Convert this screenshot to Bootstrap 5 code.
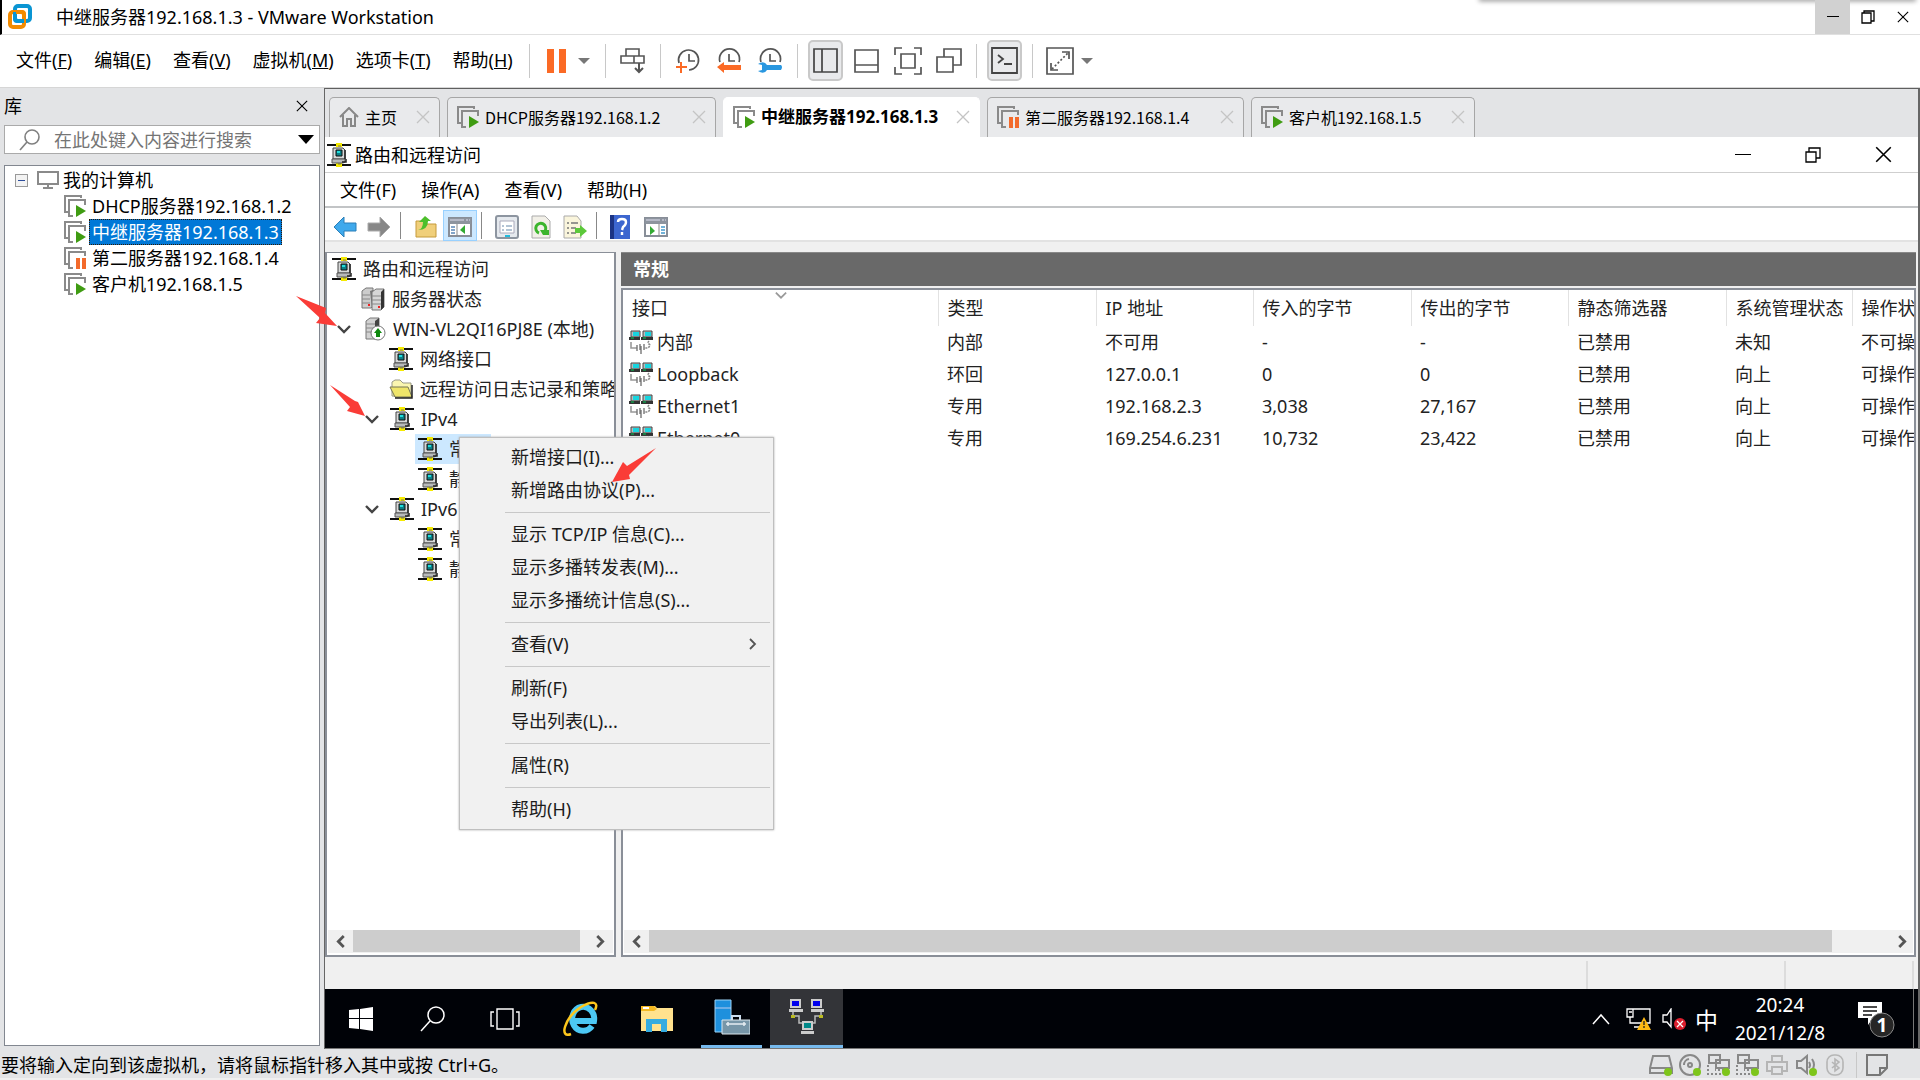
<!DOCTYPE html>
<html lang="zh-CN">
<head>
<meta charset="utf-8">
<meta name="viewport" content="width=device-width, initial-scale=1">
<title>中继服务器192.168.1.3 - VMware Workstation</title>
<link href="https://cdn.jsdelivr.net/npm/bootstrap@5.3.0/dist/css/bootstrap.min.css" rel="stylesheet">
<style>
body{font-family:"Noto Sans","Noto Sans CJK SC",sans-serif;font-size:18px;line-height:26px;color:#000;height:100vh;overflow:hidden;background:#fff}
button{border:0;background:none;padding:0;color:inherit;font:inherit;white-space:nowrap}
svg{display:block;flex:none}
ul{list-style:none;margin:0;padding:0}
.host-title{height:35px;border-bottom:1px solid #e0e0e0;border-left:2px solid #000;padding-left:6px;position:relative}
.shadow-clip{height:8px}
.top-shadow{position:absolute;top:-4px;left:77%;right:4px;height:4px;box-shadow:0 1px 5px #888}
.host-title h1{font-size:18px;line-height:26px;font-weight:400;margin:0 0 0 24px}
.win-btn{width:35px;height:34px;display:flex;align-items:center;justify-content:center}
.win-btn.hovered{background:#d1d1d1}
.host-menu{height:53px;border-bottom:1px solid #d6d6d6;padding:0 0 1px 16px}
.menu-words{gap:22px;padding-bottom:2px}
.tool-row{gap:13px}
.vsep{width:1px;height:34px;background:#c8c8c8;flex:none}
.tool{width:28px;height:40px;display:flex;align-items:center;justify-content:center}
.tool.pressed{width:35px;height:41px;margin:0 -3px;background:#e9eaec;border:2px solid #c9c9c9;border-radius:5px}
.library{width:324px;background:#e3e4e6;padding:0 4px 3px}
.lib-head{height:37px;padding-bottom:1px}
.search-box{height:29px;border:1px solid #aaa;background:#fff;padding:0 5px 0 14px}
.search-box input{border:0;outline:0;min-width:0;font-size:18px;background:transparent;padding:0;color:#555;margin-left:13px}
.search-box input::placeholder{color:#757575;opacity:1}
.lib-tree{border:1px solid #828790;background:#fff;margin-top:11px;padding:1px 0}
.lib-tree li{height:26px;display:flex;align-items:center;white-space:nowrap}
.lib-tree .vm{padding-left:59px}
.lib-tree .vm a{color:#000;text-decoration:none;margin-left:3px;padding:0 2px;line-height:24px;border:1px solid transparent}
.lib-tree .vm a.chosen{background:#0078d7;color:#fff;border:1px dotted #301800}
.workspace{background:#fff;border-top:1px solid #5f5f5f;border-left:1px solid #666;border-right:2px solid #666;min-width:0}
.tab-strip{height:48px;background:#e3e4e6;padding:8px 4px 0;gap:7px}
.vm-tab{height:40px;border:1px solid #a6a6a6;border-bottom:0;border-radius:5px 5px 0 0;background:#e9eaec;font:16px/24px "Noto Sans CJK SC",sans-serif;padding:0 9px 2px;display:flex;align-items:center}
.vm-tab span{margin-left:6px;flex:1;text-align:left}
.vm-tab.current{background:#fff;border-color:#fff;font-size:17px;font-weight:700;font-family:"Noto Sans","Noto Sans CJK SC",sans-serif}
.w-home{width:111px}.w-long{width:269px}.w-mid{width:257px}.w-short{width:224px}
.guest-title{height:36px;border-bottom:1px solid #cfcfcf;padding-left:2px}
.guest-title .win-btn{width:70px}
.guest-menu{height:35px;border-bottom:2px solid #c2c4c6;padding-left:15px;gap:25px}
.guest-tools{height:34px;border-bottom:2px solid #e2e2e2;padding:2px 0 0 3px}
.guest-tools .vsep{height:27px;background:#888}
.guest-tools button{width:34px;height:31px;padding-top:3px;display:flex;align-items:center;justify-content:center}
.guest-tools .on{background:#cce8ff;border:1px solid #99d1ff}
.guest-body{background:#f0f0f0;padding:10px 2px 0 0;gap:5px;position:relative;min-height:0}
.tree-pane{width:291px;border:2px solid #8a8f98;border-top-width:1px;background:#fff;overflow:hidden}
.tree-pane ul{padding-top:1px}
.node{height:30px;display:flex;align-items:center;white-space:nowrap}
.node a{color:#222;text-decoration:none;margin-left:7px}
.node .chev{width:14px;margin-right:11px}
.lv0{padding-left:5px}.lv1{padding-left:34px}.lv1c{padding-left:10px}.lv2{padding-left:62px}.lv2c{padding-left:38px}.lv3{padding-left:91px}
.lv3.picked{background:linear-gradient(#cce8ff,#cce8ff) 88px 0/76px 30px no-repeat}
.hbar{height:23px;background:#f0f0f0;margin:0 1px 2px}
.hbar .thumb{height:22px;background:#cdcdcd}
.hbar button{width:25px;display:flex;justify-content:center;align-items:center;height:22px}
.detail{min-width:0}
.pane-caption{height:34px;background:#696969;color:#fff;font-weight:700;padding:0 12px;line-height:33px;border-top:1px solid #888}
.list-pane{border:2px solid #8a8f98;margin-top:2px;background:#fff;overflow:hidden;position:relative}
.sort-mark{position:absolute;left:152px;top:0}
.iface{table-layout:fixed;width:1320px;border-collapse:collapse;color:#222}
.iface th{font-weight:400;height:36px;border-right:1px solid #e2e2e2;padding:0 0 0 9px;white-space:nowrap}
.iface td{height:32px;padding:0 0 1px 9px;white-space:nowrap}
.iface td:first-child{padding-left:6px}
.guest-status{height:32px;background:#f0f0f0}
.guest-status div{border-right:2px solid #dcdcdc;height:28px}
.gs-mid{width:198px}.gs-end{width:128px}
.context-list{position:absolute;left:134px;top:195px;width:315px;background:#f1f1f1;border:1px solid #bfbfbf;padding:3px;margin:0;border-radius:0;z-index:5;box-shadow:0 0 2px #aaa}
.context-list button{display:flex;align-items:center;justify-content:space-between;width:100%;height:33px;padding:0 11px 1px 48px;color:#1c1c1c}
.context-list hr{margin:5px 0 5px 42px;border:0;border-top:1px solid #c8c8c8;opacity:1}
.taskbar{height:60px;background:#000207;border-bottom:1px solid #777;color:#fff}
.task{width:72px;height:59px;display:flex;align-items:center;justify-content:center}
.task.open{width:61px;border-bottom:3px solid #76b9ed;margin-left:8px}
.task.front{width:73px;background:#333438;border-bottom:3px solid #76b9ed;margin-left:8px}
.clock{font-size:19px;line-height:28px;text-align:center;width:112px;margin-left:6px}
.notice{margin-left:21px}
.ime{font-size:23px;font-family:"Noto Sans CJK SC",sans-serif}
.desk-edge{height:59px;background:#777;margin:0 4px 0 18px}
.host-status{height:31px;background:#e3e4e6;border-bottom:2px solid #f0f0f0;padding:2px 0 0 1px}
.device-row{gap:5px}
.device-row .vsep{height:26px}
.pointer-arrow{position:absolute;z-index:9;pointer-events:none}
</style>
<script src="https://cdn.jsdelivr.net/npm/bootstrap@5.3.0/dist/js/bootstrap.bundle.min.js"></script>
</head>
<body class="d-flex flex-column">
<svg width="0" height="0" class="position-absolute" aria-hidden="true">
<defs>
<symbol id="vmrun" viewBox="0 0 22 22"><path d="M5 17H1V1h16v2M9 21H5V5h16v5" fill="none" stroke="#8a8a8a" stroke-width="2"/><path d="M12 10v12l10-6z" fill="#3f9c12"/></symbol>
<symbol id="vmpause" viewBox="0 0 22 22"><path d="M5 17H1V1h16v2M9 21H5V5h16v4" fill="none" stroke="#8a8a8a" stroke-width="2"/><path d="M12 11h4v11h-4zM18 11h4v11h-4z" fill="#f36a2b"/></symbol>
<symbol id="cross" viewBox="0 0 14 14"><path d="M1 1l12 12M13 1L1 13" fill="none" stroke="currentColor" stroke-width="1.3"/></symbol>
<symbol id="rras" viewBox="0 0 24 24"><path d="M0 2h24M0 22h24" stroke="#111" stroke-width="2"/><path d="M9 0h6v4H9zM9 20h6v4H9z" fill="#f5ea00"/><path d="M11 3h3M11 21h3" stroke="#776"/><path d="M6 5h10l2 2v9H6z" fill="#d7d9d9" stroke="#444"/><path d="M9 7h6v6H9z" fill="#0a7f86" stroke="#111"/><path d="M10 8h3v2h-3z" fill="#2dd"/><path d="M5 16h13v3l-2 1H5z" fill="#b8baba" stroke="#555"/><path d="M18 7v9M19 16v3h-4" stroke="#222" stroke-width="1.5" fill="none"/></symbol>
<symbol id="nic" viewBox="0 0 24 24"><path d="M2 1h9v6H2zM14 1h9v6h-9z" fill="#bbb" stroke="#444"/><path d="M0 7h11v3H0zM12 7h12v3H12z" fill="#333"/><path d="M4 2h6v4H4zM16 2h6v4h-6z" fill="#18d5df"/><path d="M2 8h3M14 8h3" stroke="#0c5"/><path d="M2 12v6h6" stroke="#999" stroke-width="1.6" fill="none"/><path d="M20 11q-2 2 0 3t-1 4h-4" stroke="#888" stroke-width="1.6" fill="none" stroke-dasharray="2 1"/><path d="M8 15v6M11 14v6M12 16v8M15 14v6" stroke="#777" stroke-width="1.4" fill="none"/></symbol>
<symbol id="left" viewBox="0 0 12 12"><path d="M9 1L4 6l5 5" fill="none" stroke="#555" stroke-width="2.6"/></symbol>
<symbol id="right" viewBox="0 0 12 12"><path d="M3 1l5 5-5 5" fill="none" stroke="#555" stroke-width="2.6"/></symbol>
<symbol id="down" viewBox="0 0 14 14"><path d="M1 4l6 6 6-6" fill="none" stroke="#444" stroke-width="2.4"/></symbol>
<symbol id="boxes" viewBox="0 0 16 16"><path d="M1 5h10v10H1zM4 5V1h11v10h-4" fill="none" stroke="currentColor" stroke-width="1.3"/></symbol>
<symbol id="lan" viewBox="0 0 24 24"><path d="M2 2h11v8H2zM9 7h13v8H9z" fill="#e3e4e6" stroke="#888" stroke-width="2"/><path d="M1 12v9h15M17 17H8" fill="none" stroke="#888" stroke-width="2" stroke-dasharray="2 2"/><circle cx="19" cy="19" r="4" fill="#7ec51b"/></symbol>
</defs>
</svg>

<header class="host-title d-flex align-items-center">
  <div class="shadow-clip overflow-hidden position-absolute top-0 start-0 end-0"><div class="top-shadow"></div></div>
  <svg width="24" height="26" viewBox="0 0 24 26"><rect x="7" y="2" width="15" height="15" rx="3" fill="none" stroke="#0a95d3" stroke-width="4"/><rect x="2" y="8" width="14" height="15" rx="3" fill="none" stroke="#f38b00" stroke-width="4"/><path d="M7 8v7q0 2 2 2h7" fill="none" stroke="#0a95d3" stroke-width="4"/><path d="M8 8h6q2 0 2 2v4" fill="none" stroke="#f38b00" stroke-width="4"/></svg>
  <h1>中继服务器192.168.1.3 - VMware Workstation</h1>
  <div class="d-flex ms-auto position-relative">
    <button class="win-btn hovered" aria-label="最小化"><svg width="12" height="12"><path d="M0 5h12v1H0z"/></svg></button>
    <button class="win-btn" aria-label="还原"><svg width="14" height="14" viewBox="0 0 14 14"><path d="M1 3h9v10H1zM3 3V1h10v10h-3" fill="none" stroke="#000" stroke-width="1.3"/></svg></button>
    <button class="win-btn" aria-label="关闭"><svg width="12" height="12"><use href="#cross"/></svg></button>
  </div>
</header>

<nav class="host-menu d-flex align-items-center">
  <div class="menu-words d-flex">
    <button>文件(<u>F</u>)</button><button>编辑(<u>E</u>)</button><button>查看(<u>V</u>)</button><button>虚拟机(<u>M</u>)</button><button>选项卡(<u>T</u>)</button><button>帮助(<u>H</u>)</button>
  </div>
  <div class="tool-row d-flex align-items-center ms-3">
    <i class="vsep"></i>
    <button class="ms-1" aria-label="挂起"><svg width="45" height="24" viewBox="0 0 45 24"><path d="M0 0h7v24H0zM12 0h7v24h-7z" fill="#fb6a25"/><path d="M31 9h12l-6 6z" fill="#777"/></svg></button>
    <i class="vsep"></i>
    <button class="tool" aria-label="发送 Ctrl+Alt+Del"><svg width="26" height="26" viewBox="0 0 26 26" fill="none" stroke="#555" stroke-width="1.6"><path d="M6 1h13v7H6zM1 8h13v7H1zM14 8h10v7H14z"/><path d="M19 15v9M15 20l4 4 4-4" stroke-width="2"/></svg></button>
    <i class="vsep"></i>
    <button class="tool" aria-label="拍摄快照"><svg width="24" height="26" viewBox="0 0 24 26"><path d="M3 15A10 10 0 1 1 13 22M13 6v7h6" fill="none" stroke="#555" stroke-width="1.7"/><path d="M0 19h11M5 14v11" stroke="#fb6a25" stroke-width="2"/></svg></button>
    <button class="tool" aria-label="恢复快照"><svg width="26" height="26" viewBox="0 0 26 26"><path d="M4 14A10 10 0 1 1 23 14M13 6v7h6" fill="none" stroke="#555" stroke-width="1.7"/><path d="M1 19l7-5v3h17v5H8v3z" fill="#fb6a25"/></svg></button>
    <button class="tool" aria-label="管理快照"><svg width="26" height="26" viewBox="0 0 26 26"><path d="M4 14A10 10 0 1 1 23 14M13 6v7h6" fill="none" stroke="#555" stroke-width="1.7"/><path d="M1 16q6-4 9 1h14q2 2 0 5H10q-3 5-9 1l4-1v-5z" fill="#2997e0"/></svg></button>
    <i class="vsep"></i>
    <button class="tool pressed" aria-label="库"><svg width="25" height="25" fill="none" stroke="#444" stroke-width="1.7"><path d="M1 1h23v23H1zM9 1v23"/></svg></button>
    <button class="tool" aria-label="缩略图"><svg width="25" height="24" fill="none" stroke="#555" stroke-width="1.7"><path d="M1 1h23v22H1zM1 16h23"/></svg></button>
    <button class="tool" aria-label="全屏"><svg width="28" height="28" fill="none" stroke="#555" stroke-width="1.7"><path d="M8 1H1v7M20 1h7v7M8 27H1v-7M20 27h7v-7M7 7h14v14H7z"/></svg></button>
    <button class="tool" aria-label="Unity"><svg width="26" height="26" fill="none" stroke="#555" stroke-width="1.7"><path d="M1 9h16v15H1zM8 9V1h17v16h-8"/></svg></button>
    <i class="vsep"></i>
    <button class="tool pressed" aria-label="控制台"><svg width="27" height="27" fill="none" stroke="#444" stroke-width="1.8"><path d="M1 1h25v25H1zM7 8l5 4-5 4M13 17h8"/></svg></button>
    <i class="vsep"></i>
    <button aria-label="自由拉伸"><svg width="50" height="28" viewBox="0 0 50 28" fill="none" stroke="#555" stroke-width="1.7"><path d="M1 1h26v26H1z"/><path d="M5 16v7h7M16 5h7v7"/><path d="M6 22L22 6" stroke-dasharray="2 2"/><path d="M35 11h12l-6 6z" fill="#777" stroke="none"/></svg></button>
  </div>
</nav>

<main class="d-flex flex-grow-1 overflow-hidden">
  <aside class="library d-flex flex-column flex-shrink-0">
    <div class="lib-head d-flex align-items-center justify-content-between pe-2"><span>库</span><button class="me-1" aria-label="关闭库"><svg width="12" height="12"><use href="#cross"/></svg></button></div>
    <label class="search-box d-flex align-items-center">
      <svg width="22" height="22" viewBox="0 0 22 22" fill="none" stroke="#808080" stroke-width="1.6"><circle cx="13" cy="8" r="7"/><path d="M8 13l-7 8"/></svg>
      <input class="flex-grow-1" type="text" placeholder="在此处键入内容进行搜索" aria-label="搜索">
      <svg width="16" height="9"><path d="M0 0h16L8 9z"/></svg>
    </label>
    <ul class="lib-tree flex-grow-1">
      <li class="ps-2"><svg class="me-2" width="16" height="13" viewBox="0 0 16 13"><path d="M2 0h13v13H2z" fill="#999"/><path d="M3 1h11v11H3z" fill="#f3f3f3"/><path d="M5 6h7v1H5z" fill="#2c4d9b"/></svg><svg width="22" height="18" fill="none" stroke="#8a8a8a" stroke-width="2"><path d="M1 1h20v12H1zM11 13v4M6 17h10"/></svg><span class="ms-1">我的计算机</span></li>
      <li class="vm"><svg width="22" height="22"><use href="#vmrun"/></svg><a href="#">DHCP服务器192.168.1.2</a></li>
      <li class="vm"><svg width="22" height="22"><use href="#vmrun"/></svg><a href="#" class="chosen">中继服务器192.168.1.3</a></li>
      <li class="vm"><svg width="22" height="22"><use href="#vmpause"/></svg><a href="#">第二服务器192.168.1.4</a></li>
      <li class="vm"><svg width="22" height="22"><use href="#vmrun"/></svg><a href="#">客户机192.168.1.5</a></li>
    </ul>
  </aside>

  <section class="workspace d-flex flex-column flex-grow-1">
    <div class="tab-strip d-flex" role="tablist">
      <button class="vm-tab w-home" role="tab"><svg width="20" height="20" fill="none" stroke="#888" stroke-width="2"><path d="M1 10l9-9 9 9M4 8v11h4v-7h4v7h4V8"/></svg><span>主页</span><svg width="14" height="14" color="#c4c4c4"><use href="#cross"/></svg></button>
      <button class="vm-tab w-long" role="tab"><svg width="22" height="22"><use href="#vmrun"/></svg><span>DHCP服务器192.168.1.2</span><svg width="14" height="14" color="#c4c4c4"><use href="#cross"/></svg></button>
      <button class="vm-tab w-mid current" role="tab"><svg width="22" height="22"><use href="#vmrun"/></svg><span>中继服务器192.168.1.3</span><svg width="14" height="14" color="#c4c4c4"><use href="#cross"/></svg></button>
      <button class="vm-tab w-mid" role="tab"><svg width="22" height="22"><use href="#vmpause"/></svg><span>第二服务器192.168.1.4</span><svg width="14" height="14" color="#c4c4c4"><use href="#cross"/></svg></button>
      <button class="vm-tab w-short" role="tab"><svg width="22" height="22"><use href="#vmrun"/></svg><span>客户机192.168.1.5</span><svg width="14" height="14" color="#c4c4c4"><use href="#cross"/></svg></button>
    </div>

    <div class="guest-title d-flex align-items-center">
      <svg width="24" height="24"><use href="#rras"/></svg><span class="ms-1">路由和远程访问</span>
      <div class="d-flex ms-auto">
        <button class="win-btn" aria-label="最小化"><svg width="16" height="16"><path d="M0 7h16v1H0z"/></svg></button>
        <button class="win-btn" aria-label="还原"><svg width="16" height="16"><use href="#boxes"/></svg></button>
        <button class="win-btn" aria-label="关闭"><svg width="17" height="17"><use href="#cross"/></svg></button>
      </div>
    </div>
    <nav class="guest-menu d-flex align-items-center"><button>文件(F)</button><button>操作(A)</button><button>查看(V)</button><button>帮助(H)</button></nav>
    <div class="guest-tools d-flex align-items-center">
      <button aria-label="后退"><svg width="24" height="22" viewBox="0 0 24 22"><path d="M1 11L11 1v6h12v8H11v6z" fill="#3fa9ec" stroke="#2a7fb8"/></svg></button>
      <button aria-label="前进"><svg width="24" height="22" viewBox="0 0 24 22"><path d="M23 11L13 1v6H1v8h12v6z" fill="#878787" stroke="#aaa"/></svg></button>
      <i class="vsep ms-1 me-2"></i>
      <button aria-label="上一级"><svg width="22" height="24" viewBox="0 0 22 24"><path d="M1 22V6h8l2 3h10v13z" fill="#f0cf7a" stroke="#c59a3b"/><path d="M3 15q5-1 5-8H4l6-6 6 5h-3q0 9-10 9z" fill="#4cbf2b"/></svg></button>
      <button class="on" aria-label="显示树"><svg width="24" height="20"><path d="M1 1h22v18H1z" fill="#fff" stroke="#888e98" stroke-width="2"/><path d="M1 1h22v6H1z" fill="#8d949e"/><path d="M2 3h14M18 3h2M21 3h1" stroke="#dde"/><path d="M9 7v12" stroke="#888"/><path d="M3 10h4M3 13h4M3 16h4" stroke="#5b88b8" stroke-width="1.5"/><path d="M17 8v9l-5-4z" fill="#3a3"/></svg></button>
      <i class="vsep ms-1 me-1"></i>
      <button class="ms-1" aria-label="属性"><svg width="24" height="24"><rect x="1" y="1" width="22" height="22" rx="2" fill="#e5e9ee" stroke="#8d95a0" stroke-width="2"/><path d="M5 6h14v12H5z" fill="#fff" stroke="#aab"/><path d="M7 11h2M11 11h6M7 15h2M11 15h6" stroke="#68a"/><path d="M10 21h5" stroke="#2bd" stroke-width="2"/></svg></button>
      <button aria-label="刷新"><svg width="20" height="24"><path d="M1 1h13l5 5v17H1z" fill="#f2f0e8" stroke="#aaa"/><path d="M8 18a5 5 0 1 1 6-2" fill="none" stroke="#3cb52d" stroke-width="3"/><path d="M9 15h9v5h-6z" fill="#3cb52d"/></svg></button>
      <button aria-label="导出"><svg width="24" height="24"><path d="M1 1h13l4 5v17H1z" fill="#faf5dc" stroke="#aaa"/><path d="M4 8h2M8 8h7M4 13h2M8 13h5M4 18h2M8 18h5" stroke="#777" stroke-width="1.5"/><path d="M12 13h5v-3l7 6-7 6v-4h-5z" fill="#5cc83a"/></svg></button>
      <i class="vsep mx-1"></i>
      <button aria-label="帮助"><svg class="ms-1" width="20" height="24"><path d="M0 0h20v24H0z" fill="#3c66cf"/><path d="M0 0h4v24H0z" fill="#1c3484"/><path d="M8 7q0-3 4-3t4 3-3 5l-1 3M12 17v3" fill="none" stroke="#fff" stroke-width="2.4"/></svg></button>
      <button class="ms-1" aria-label="操作窗格"><svg width="24" height="20"><path d="M1 1h22v18H1z" fill="#fff" stroke="#888e98" stroke-width="2"/><path d="M1 1h22v6H1z" fill="#8d949e"/><path d="M2 3h14M18 3h2M21 3h1" stroke="#dde"/><path d="M15 7v12" stroke="#888"/><path d="M17 10h4M17 13h4M17 16h4" stroke="#49c" stroke-width="1.5"/><path d="M6 9v9l5-4z" fill="#3a3"/></svg></button>
    </div>

    <div class="guest-body d-flex flex-grow-1">
      <div class="tree-pane d-flex flex-column flex-shrink-0">
        <ul class="flex-grow-1">
          <li class="node lv0"><svg width="24" height="24"><use href="#rras"/></svg><a href="#">路由和远程访问</a></li>
          <li class="node lv1"><svg width="24" height="24"><path d="M1 4l4-3h7v18l-2 2H1z" fill="#ccc" stroke="#777"/><path d="M9 4l3-1 2 1v17l-3 1z" fill="#777"/><path d="M11 5l4-3h8v18l-3 3h-9z" fill="#d6d6d6" stroke="#777"/><path d="M20 5l3-3v18l-3 3z" fill="#333"/><path d="M1 8h8M1 12h8M1 16h8M11 9h9M11 13h9M11 17h9" stroke="#888"/><path d="M7 18h2M17 20h2" stroke="#e22" stroke-width="2"/></svg><a href="#">服务器状态</a></li>
          <li class="node lv1c"><svg class="chev" width="14" height="14"><use href="#down"/></svg><svg width="24" height="24"><path d="M4 4l4-3h9v18l-4 3H4z" fill="#d2d2d2" stroke="#777"/><path d="M13 4l4-3v18l-4 3z" fill="#444"/><path d="M4 7h9M4 11h9M4 15h9" stroke="#888"/><circle cx="16" cy="16" r="7" fill="#fff" stroke="#777"/><path d="M16 11l4 5h-2v4h-4v-4h-2z" fill="#108a10"/></svg><a href="#">WIN-VL2QI16PJ8E (本地)</a></li>
          <li class="node lv2"><svg width="24" height="24"><use href="#rras"/></svg><a href="#">网络接口</a></li>
          <li class="node lv2"><svg width="24" height="20"><path d="M3 17V3l3-2h5l3 3h8v14z" fill="#faf6b0" stroke="#998"/><path d="M1 8h18l4 10H6z" fill="#efe56a" stroke="#775"/><path d="M6 19h17V6" stroke="#222" fill="none" stroke-width="1.5"/></svg><a href="#">远程访问日志记录和策略</a></li>
          <li class="node lv2c"><svg class="chev" width="14" height="14"><use href="#down"/></svg><svg width="24" height="24"><use href="#rras"/></svg><a href="#">IPv4</a></li>
          <li class="node lv3 picked"><svg width="24" height="24"><use href="#rras"/></svg><a href="#">常规</a></li>
          <li class="node lv3"><svg width="24" height="24"><use href="#rras"/></svg><a href="#">静态路由</a></li>
          <li class="node lv2c"><svg class="chev" width="14" height="14"><use href="#down"/></svg><svg width="24" height="24"><use href="#rras"/></svg><a href="#">IPv6</a></li>
          <li class="node lv3"><svg width="24" height="24"><use href="#rras"/></svg><a href="#">常规</a></li>
          <li class="node lv3"><svg width="24" height="24"><use href="#rras"/></svg><a href="#">静态路由</a></li>
        </ul>
        <div class="hbar d-flex"><button aria-label="向左"><svg width="13" height="13"><use href="#left"/></svg></button><div class="thumb flex-grow-1 me-2"></div><button aria-label="向右"><svg width="13" height="13"><use href="#right"/></svg></button></div>
      </div>
      <div class="detail d-flex flex-column flex-grow-1">
        <div class="pane-caption">常规</div>
        <div class="list-pane d-flex flex-column flex-grow-1">
          <svg class="sort-mark" width="12" height="12" viewBox="0 0 14 14"><path d="M1 3l6 6 6-6" fill="none" stroke="#999" stroke-width="2"/></svg>
          <div class="flex-grow-1">
          <table class="iface">
            <colgroup><col style="width:315px"><col style="width:158px"><col style="width:157px"><col style="width:158px"><col style="width:157px"><col style="width:158px"><col style="width:126px"><col></colgroup>
            <thead><tr><th>接口</th><th>类型</th><th>IP 地址</th><th>传入的字节</th><th>传出的字节</th><th>静态筛选器</th><th>系统管理状态</th><th>操作状态</th></tr></thead>
            <tbody>
              <tr><td><div class="d-flex align-items-center"><svg class="me-1" width="24" height="24"><use href="#nic"/></svg>内部</div></td><td>内部</td><td>不可用</td><td>-</td><td>-</td><td>已禁用</td><td>未知</td><td>不可操作</td></tr>
              <tr><td><div class="d-flex align-items-center"><svg class="me-1" width="24" height="24"><use href="#nic"/></svg>Loopback</div></td><td>环回</td><td>127.0.0.1</td><td>0</td><td>0</td><td>已禁用</td><td>向上</td><td>可操作</td></tr>
              <tr><td><div class="d-flex align-items-center"><svg class="me-1" width="24" height="24"><use href="#nic"/></svg>Ethernet1</div></td><td>专用</td><td>192.168.2.3</td><td>3,038</td><td>27,167</td><td>已禁用</td><td>向上</td><td>可操作</td></tr>
              <tr><td><div class="d-flex align-items-center"><svg class="me-1" width="24" height="24"><use href="#nic"/></svg>Ethernet0</div></td><td>专用</td><td>169.254.6.231</td><td>10,732</td><td>23,422</td><td>已禁用</td><td>向上</td><td>可操作</td></tr>
            </tbody>
          </table>
          </div>
          <div class="hbar d-flex"><button aria-label="向左"><svg width="13" height="13"><use href="#left"/></svg></button><div class="thumb flex-grow-1 me-5"></div><button class="ms-2 ps-1" aria-label="向右"><svg width="13" height="13"><use href="#right"/></svg></button></div>
        </div>
      </div>
      <div class="context-list" role="menu">
        <button role="menuitem">新增接口(I)...</button>
        <button role="menuitem">新增路由协议(P)...</button>
        <hr>
        <button role="menuitem">显示 TCP/IP 信息(C)...</button>
        <button role="menuitem">显示多播转发表(M)...</button>
        <button role="menuitem">显示多播统计信息(S)...</button>
        <hr>
        <button role="menuitem">查看(V)<svg width="12" height="12" viewBox="0 0 12 12"><path d="M3 1l5 5-5 5" fill="none" stroke="#555" stroke-width="1.8"/></svg></button>
        <hr>
        <button role="menuitem">刷新(F)</button>
        <button role="menuitem">导出列表(L)...</button>
        <hr>
        <button role="menuitem">属性(R)</button>
        <hr>
        <button role="menuitem">帮助(H)</button>
      </div>
    </div>
    <div class="guest-status d-flex align-items-end"><div class="flex-grow-1"></div><div class="gs-mid"></div><div class="gs-end me-1"></div></div>

    <div class="taskbar d-flex align-items-center">
      <button class="task" aria-label="开始"><svg width="24" height="24" fill="#fff"><path d="M0 3l10-1v9H0zM11 2l13-2v11H11zM0 12h10v10L0 21zM11 12h13v12l-13-2z"/></svg></button>
      <button class="task" aria-label="搜索"><svg width="26" height="26" fill="none" stroke="#fff" stroke-width="1.5"><circle cx="16" cy="9" r="8"/><path d="M10 15L1 25"/></svg></button>
      <button class="task" aria-label="任务视图"><svg width="30" height="22" fill="none" stroke="#fff" stroke-width="1.4"><path d="M7 1h16v20H7zM4 4H1v14h3M26 4h3v14h-3"/></svg></button>
      <button class="task ms-1" aria-label="Internet Explorer"><svg width="36" height="36" viewBox="0 0 36 36"><path d="M29 25A11 12 0 1 1 31 20H10" fill="none" stroke="#4cc8f4" stroke-width="6"/><path d="M8 33C-4 38 1 17 18 6 30-1 36 1 32 9" fill="none" stroke="#fcc61c" stroke-width="2.5"/></svg></button>
      <button class="task ms-1" aria-label="文件资源管理器"><svg width="32" height="28"><path d="M0 1h14l2 2h16v23H0z" fill="#ffe28e"/><path d="M0 1h13l3 3-3 2H0z" fill="#f4b922"/><path d="M2 3h6" stroke="#fff" stroke-width="2"/><path d="M5 27V14h21v13h-6v-8h-9v8z" fill="#35ace0"/></svg></button>
      <button class="task open" aria-label="服务器管理器"><svg width="36" height="36" viewBox="0 0 36 36"><path d="M1 1h16v32H1z" fill="#1e90dd" stroke="#9bd3f7"/><path d="M1 9h16" stroke="#bce"/><path d="M18 21v-4h8v4" fill="none" stroke="#cde" stroke-width="2"/><path d="M8 21h28v14H8z" fill="#7796a8" stroke="#dbe6ec"/><path d="M12 25h20M14 23v4M30 23v4" stroke="#e6edf2" stroke-width="1.5"/></svg></button>
      <button class="task front" aria-label="路由和远程访问"><svg width="36" height="36" viewBox="0 0 36 36"><path d="M4 17h6v7h4M32 17h-6v7h-4M4 13v6M32 13v6" fill="none" stroke="#bbb" stroke-width="1.5"/><g fill="#ccc"><path d="M1 0h11v9H1zM0 10h14v3H0zM22 0h11v9H22zM22 10h13v3H22zM13 22h11v9H13zM12 32h13v3H12z"/></g><path d="M3 2h7v5H3zM24 2h7v5h-7z" fill="#00e"/><path d="M15 24h7v5h-7z" fill="#088"/><path d="M2 16h4v3H2zM30 16h4v3h-4z" fill="#bb2"/></svg></button>
      <div class="d-flex align-items-center ms-auto">
        <svg class="me-3" width="18" height="12" fill="none" stroke="#fff" stroke-width="1.5"><path d="M1 11l8-9 8 9"/></svg>
        <svg width="25" height="22" fill="none" stroke="#fff" stroke-width="1.3"><path d="M7 5V1h17v14H4V9M1 1h6v8H1zM3 4h3M8 19h6"/><path d="M18 9l7 13H11z" fill="#fdb813" stroke="none"/><path d="M18 13v4M18 18v2" stroke="#222"/></svg>
        <svg class="ms-2 me-1" width="28" height="22" fill="none" stroke="#fff" stroke-width="1.3"><path d="M4 7h4l4-6v18l-4-5H4z"/><circle cx="21" cy="16" r="6" fill="#dc1f2e" stroke="none"/><path d="M18 13l6 6M24 13l-6 6"/></svg>
        <span class="ime ms-1">中</span>
        <div class="clock">20:24<br>2021/12/8</div>
        <button class="notice" aria-label="通知"><svg width="38" height="38" viewBox="0 0 38 38"><path d="M1 2h24v16H16l-5 7v-7H1z" fill="#fff"/><path d="M6 7h14M6 11h14M6 15h9" stroke="#111" stroke-width="1.5"/><circle cx="25" cy="25" r="12" fill="#262626" stroke="#888"/><text x="25" y="32" text-anchor="middle" fill="#fff" font-size="19" font-weight="700">1</text></svg></button>
        <i class="vsep desk-edge"></i>
      </div>
    </div>
  </section>
</main>

<footer class="host-status d-flex align-items-center">
  <span>要将输入定向到该虚拟机，请将鼠标指针移入其中或按 Ctrl+G。</span>
  <div class="device-row d-flex align-items-center ms-auto me-4 pe-2">
    <svg width="24" height="22" fill="none" stroke="#888" stroke-width="2"><path d="M4 2h16l3 12v5H1v-5zM1 14h22"/><circle cx="19" cy="18" r="4" fill="#7ec51b" stroke="none"/></svg>
    <svg width="24" height="22" fill="none" stroke="#888" stroke-width="2"><circle cx="12" cy="11" r="10"/><circle cx="12" cy="11" r="2"/><path d="M6 11a6 6 0 0 1 5-6"/><circle cx="19" cy="18" r="4" fill="#7ec51b" stroke="none"/></svg>
    <svg width="24" height="24"><use href="#lan"/></svg>
    <svg width="24" height="24"><use href="#lan"/></svg>
    <svg width="24" height="22" fill="none" stroke="#b5b5b5" stroke-width="2"><path d="M7 8V2h10v6M6 17H2V8h20v9h-4M7 13h10v7H7z"/></svg>
    <svg width="24" height="22" fill="none" stroke="#888" stroke-width="2"><path d="M3 7h4l6-5v17l-6-5H3zM15 8q2 3 0 6M18 5q4 6 0 11"/><circle cx="19" cy="18" r="4" fill="#7ec51b" stroke="none"/></svg>
    <svg width="24" height="22" fill="none" stroke="#b5b5b5" stroke-width="1.6"><rect x="4" y="1" width="16" height="20" rx="7"/><path d="M9 8l7 6-4 3V5l4 3-7 6"/></svg>
    <i class="vsep mx-1"></i>
    <svg width="22" height="22" fill="none" stroke="#777" stroke-width="2"><path d="M1 1h20v13l-7 7H1zM14 21v-7h7"/></svg>
  </div>
</footer>

<svg class="pointer-arrow" style="left:296px;top:296px" width="42" height="30" viewBox="0 0 42 30"><path d="M0 0L30 12l-1 5 12 13-21-3 4-5z" fill="#fa3c37"/></svg>
<svg class="pointer-arrow" style="left:330px;top:385px" width="36" height="32" viewBox="0 0 36 32"><path d="M0 0L25 16l3 1 7 14-18-5 3-4z" fill="#fa3c37"/></svg>
<svg class="pointer-arrow" style="left:612px;top:448px" width="44" height="34" viewBox="0 0 44 34"><path d="M44 0L17 27l1 4L0 34 11 14l4 4z" fill="#fa3c37"/></svg>
</body>
</html>
